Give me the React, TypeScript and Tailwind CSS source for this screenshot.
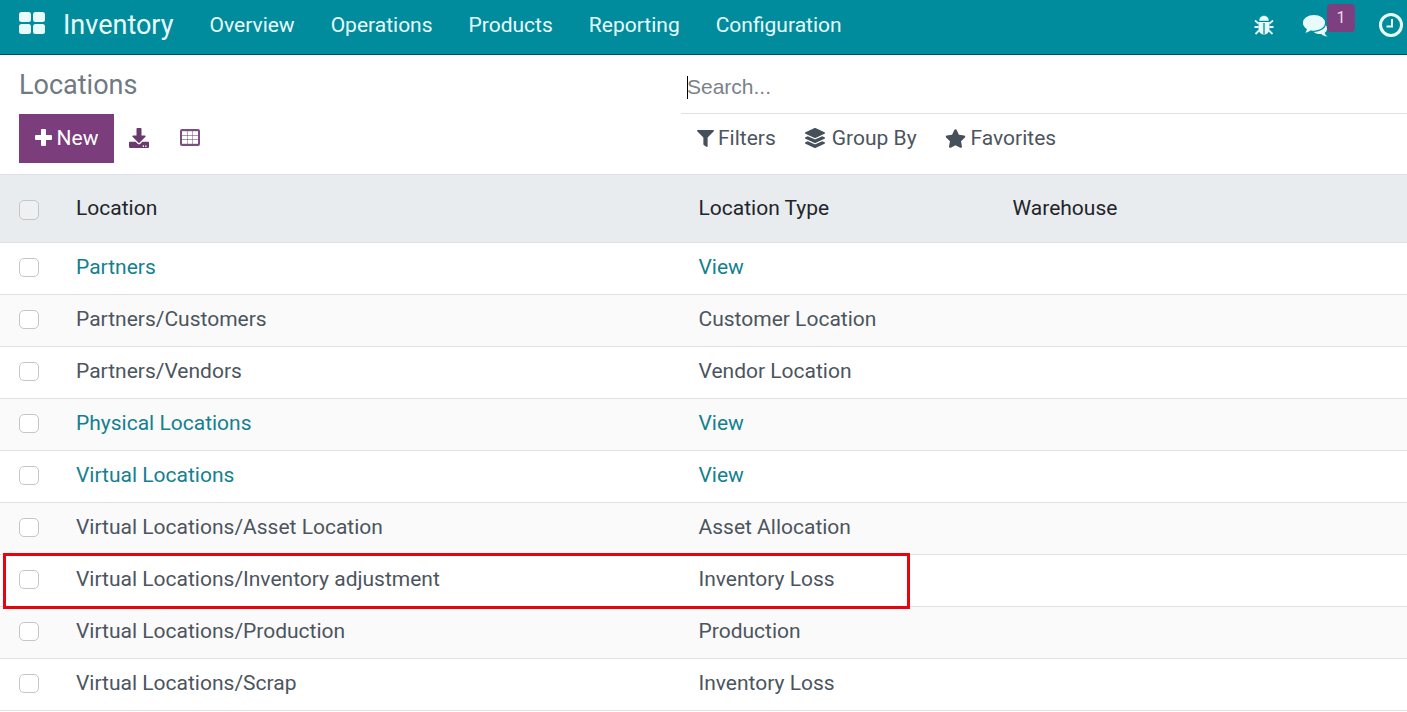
import React from 'react';
import { FaDownload, FaFilter, FaLayerGroup, FaStar } from 'react-icons/fa';

const menus = ['Overview', 'Operations', 'Products', 'Reporting', 'Configuration'];

const rows = [
  { name: 'Partners', type: 'View', link: true },
  { name: 'Partners/Customers', type: 'Customer Location' },
  { name: 'Partners/Vendors', type: 'Vendor Location' },
  { name: 'Physical Locations', type: 'View', link: true },
  { name: 'Virtual Locations', type: 'View', link: true },
  { name: 'Virtual Locations/Asset Location', type: 'Asset Allocation' },
  { name: 'Virtual Locations/Inventory adjustment', type: 'Inventory Loss' },
  { name: 'Virtual Locations/Production', type: 'Production' },
  { name: 'Virtual Locations/Scrap', type: 'Inventory Loss' },
];

function AppsIcon() {
  return (
    <svg viewBox="0 0 26 22" className="mb-[4px] ml-[19px] h-[22px] w-[26px]" fill="currentColor">
      <rect x="0" y="0" width="12" height="10" rx="2.5" />
      <rect x="14" y="0" width="12" height="10" rx="2.5" />
      <rect x="0" y="12" width="12" height="10" rx="2.5" />
      <rect x="14" y="12" width="12" height="10" rx="2.5" />
    </svg>
  );
}

function BugIcon() {
  return (
    <svg viewBox="0 0 20 20" className="h-[20px] w-[20px]" fill="currentColor" stroke="currentColor">
      <path d="M5.500 5.500a4.500 4.500 0 0 1 9 0z" strokeWidth="0.5" />
      <path d="M4.500 7h11v7a5.500 5.500 0 0 1-11 0z" strokeWidth="0" />
      <path d="M10 8v11" stroke="#008c9c" strokeWidth="1.3" />
      <path d="M1 5.500l3.500 3M19 5.500l-3.500 3M0.500 12h4M19.500 12h-4M1.500 19l3.500-3.500M18.500 19L15 15.500" strokeWidth="1.8" fill="none" />
    </svg>
  );
}

function CommentsIcon() {
  return (
    <svg viewBox="0 0 27 23" className="h-[23px] w-[27px]" fill="currentColor">
      <path d="M17 9h4c2.500 1 4 3 4 5.500 0 1.800-.9 3.300-2.300 4.300.3 1.300 1.300 2.700 3 3.700-2.700 0-5-1-6.500-2.500-3 .3-6-.5-8-2.500z" />
      <path
        d="M12 0.300c6.500 0 11.700 3.700 11.700 8.500s-5.200 8.500-11.700 8.500c-1 0-2-.1-3-.3-1.800 1.500-4.200 2.500-7.400 2.700 1.300-1.200 2.200-2.700 2.600-4.200C1.800 13.800.3 11.500.3 8.800.3 4 5.500.3 12 .3z"
        stroke="#008c9c"
        strokeWidth="1.200"
      />
    </svg>
  );
}

function ClockIcon() {
  return (
    <svg viewBox="0 0 24 24" className="ml-[50px] mr-[4px] h-[24px] w-[24px]" fill="none" stroke="currentColor">
      <circle cx="12" cy="12" r="10.500" strokeWidth="3" />
      <path d="M13 6v7.500H7.500" strokeWidth="2" />
    </svg>
  );
}

function PlusIcon() {
  return (
    <svg viewBox="0 0 17 17" className="mb-[2px] h-[17px] w-[17px]" fill="currentColor">
      <path d="M6 1a1 1 0 0 1 1-1h3a1 1 0 0 1 1 1v5h5a1 1 0 0 1 1 1v3a1 1 0 0 1-1 1h-5v5a1 1 0 0 1-1 1H7a1 1 0 0 1-1-1v-5H1a1 1 0 0 1-1-1V7a1 1 0 0 1 1-1h5z" />
    </svg>
  );
}

function GridIcon() {
  const cells = [2.200, 6.600, 11].flatMap((y) => [2, 7.500, 13].map((x) => ({ x, y })));
  return (
    <svg viewBox="0 0 20 17" className="mb-[2px] ml-[31px] h-[17px] w-[20px]">
      <rect x="0" y="0" width="20" height="17" rx="2" fill="#7c4d80" />
      {cells.map((c) => (
        <rect key={`${c.x}-${c.y}`} x={c.x} y={c.y} width="5" height="3.800" fill="#fff" />
      ))}
    </svg>
  );
}

function Checkbox({ tall }: { tall?: boolean }) {
  return (
    <span
      className={`block w-[20px] rounded-[5px] border border-[#c4c6c8] ${tall ? 'h-[20px] bg-[#eef0f2]' : 'h-[19px] bg-white'}`}
    />
  );
}

function Navbar() {
  return (
    <header className="flex h-[55px] items-center border-b border-[#00515c] bg-[#008c9c] pb-[4px] text-[#e8fbfb]">
      <AppsIcon />
      <span className="ml-[18px] mr-[36px] text-[27px] leading-none">Inventory</span>
      <nav className="flex gap-[36px] text-[21px] leading-none">
        {menus.map((menu) => (
          <span key={menu}>{menu}</span>
        ))}
      </nav>
      <div className="ml-auto flex items-center">
        <BugIcon />
        <div className="relative ml-[28px] flex">
          <CommentsIcon />
          <span className="absolute left-[25px] top-[-10px] flex h-[28px] w-[28px] items-center justify-center rounded-[4px] bg-[#7c3f7f] text-[16px] leading-none text-[#e8dce8]">
            1
          </span>
        </div>
        <ClockIcon />
      </div>
    </header>
  );
}

function ControlPanel() {
  return (
    <section className="flex h-[120px] bg-white">
      <div className="w-[681px] pl-[19px]">
        <h1 className="mt-[12px] text-[27px] leading-[36px] text-[#6f7a82]">Locations</h1>
        <div className="mt-[11px] flex items-center">
          <button className="flex h-[49px] w-[95px] items-center justify-center gap-[5px] bg-[#7c3d7c] pb-[1px] text-[21px] leading-none text-white">
            <PlusIcon />
            New
          </button>
          <FaDownload className="mb-[2px] ml-[15px] h-[20px] w-[20px] text-[#6a3a6e]" />
          <GridIcon />
        </div>
      </div>
      <div className="flex-1">
        <div className="flex h-[59px] items-center border-b border-[#dee2e6] pl-[6px] pt-[6px]">
          <span className="h-[23px] w-px bg-black" />
          <span className="-ml-px font-['Liberation_Sans',sans-serif] text-[21px] text-[#7b8288]">Search...</span>
        </div>
        <div className="flex h-[48px] items-center pl-[16px] text-[21px] leading-none text-[#4c555e]">
          <FaFilter className="h-[17px] w-[17px] text-[#46505a]" />
          <span className="ml-[4px]">Filters</span>
          <FaLayerGroup className="ml-[29px] h-[20px] w-[20px] text-[#46505a]" />
          <span className="ml-[7px]">Group By</span>
          <FaStar className="ml-[28px] h-[19px] w-[21px] text-[#46505a]" />
          <span className="ml-[5px]">Favorites</span>
        </div>
      </div>
    </section>
  );
}

function LocationTable() {
  return (
    <section className="relative">
      <div className="-mt-px flex h-[69px] items-center border-y border-[#dee2e6] bg-[#e9ecef] text-[21px] leading-none text-[#212529]">
        <div className="w-[76px] pl-[19px] pt-[3px]">
          <Checkbox tall />
        </div>
        <div className="w-[622.5px]">Location</div>
        <div className="w-[314px]">Location Type</div>
        <div>Warehouse</div>
      </div>
      {rows.map((row, i) => (
        <div
          key={row.name}
          className={`flex h-[52px] items-center border-b border-[#dee2e6] pb-[2px] text-[21px] leading-none ${i % 2 ? 'bg-[#fafafa]' : 'bg-white'} ${row.link ? 'text-[#14808f]' : 'text-[#4c555e]'}`}
        >
          <div className="w-[76px] pl-[19px]">
            <Checkbox />
          </div>
          <div className="w-[622.5px]">{row.name}</div>
          <div>{row.type}</div>
        </div>
      ))}
      {/* red annotation around the inventory adjustment row */}
      <div className="absolute left-[3px] top-[379px] h-[56px] w-[907px] border-[3px] border-[#e8040c]" />
    </section>
  );
}

export default function App() {
  return (
    <div className="h-[712px] w-[1407px] overflow-hidden bg-white font-['Roboto',sans-serif]">
      <Navbar />
      <ControlPanel />
      <LocationTable />
    </div>
  );
}
